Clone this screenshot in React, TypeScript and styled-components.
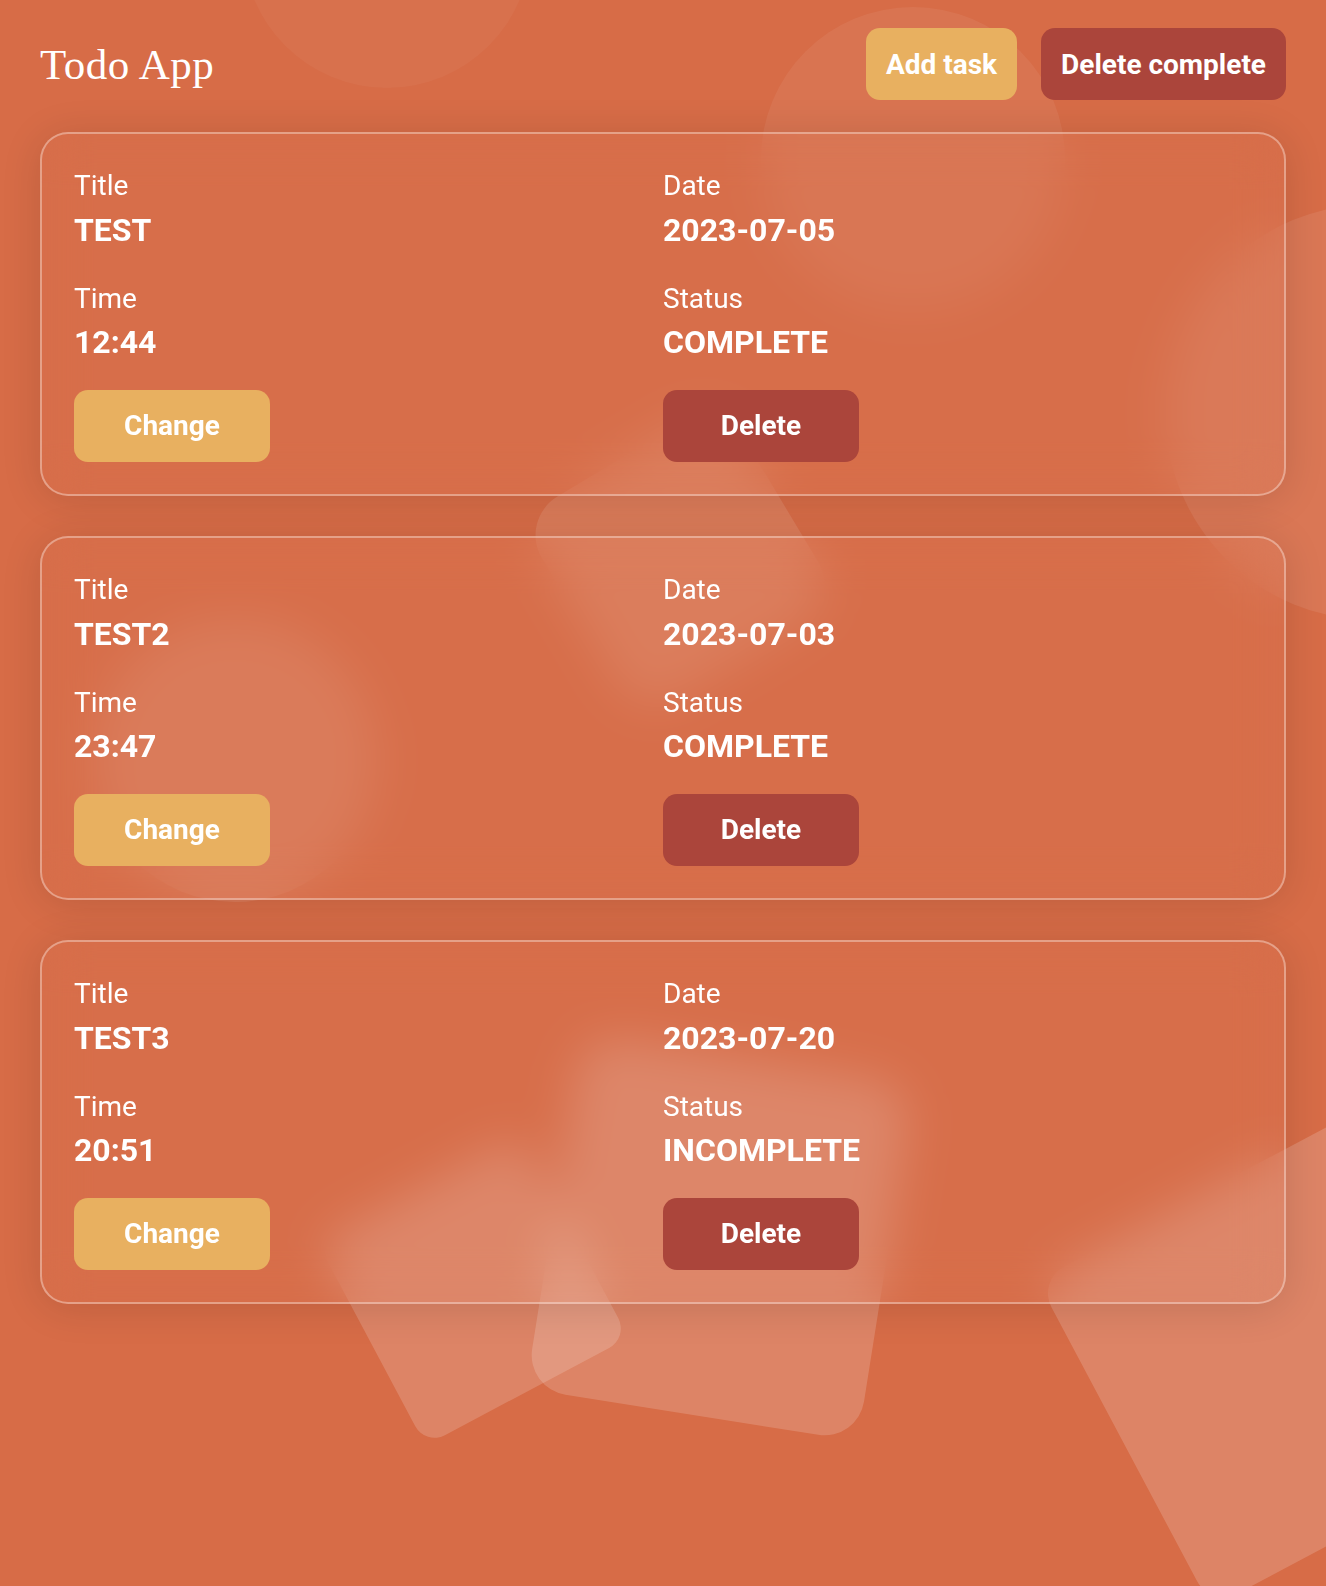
import React from "react";
import styled, { createGlobalStyle } from "styled-components";

type Status = "COMPLETE" | "INCOMPLETE";

type Task = {
  id: number;
  title: string;
  date: string;
  time: string;
  status: Status;
};

const tasks: Task[] = [
  { id: 1, title: "TEST", date: "2023-07-05", time: "12:44", status: "COMPLETE" },
  { id: 2, title: "TEST2", date: "2023-07-03", time: "23:47", status: "COMPLETE" },
  { id: 3, title: "TEST3", date: "2023-07-20", time: "20:51", status: "INCOMPLETE" },
];

// decorative shapes floating behind the glass cards
const circles = [
  { cx: 387, cy: -56, r: 144, o: 0.035 },
  { cx: 913, cy: 159, r: 152, o: 0.06 },
  { cx: 1373, cy: 412, r: 208, o: 0.08 },
  { cx: 235, cy: 760, r: 142, o: 0.09 },
];

const squares = [
  { cx: 680, cy: 560, w: 235, h: 235, rx: 45, a: -31, o: 0.1 },
  { cx: 473, cy: 1290, w: 230, h: 230, rx: 22, a: -28, o: 0.17 },
  { cx: 720, cy: 1237, w: 336, h: 360, rx: 40, a: 9, o: 0.17 },
  { cx: 1292, cy: 1355, w: 380, h: 370, rx: 30, a: -28, o: 0.17 },
];

const GlobalStyle = createGlobalStyle`
  html, body {
    margin: 0;
    padding: 0;
    background: #d76c47;
  }
  body {
    font-family: Roboto, "Liberation Sans", sans-serif;
    color: #fff;
  }
  * {
    box-sizing: border-box;
  }
`;

const Backdrop = () => (
  <BackdropSvg viewBox="0 0 1326 1586" preserveAspectRatio="xMidYMin slice">
    {circles.map((c, i) => (
      <circle key={i} cx={c.cx} cy={c.cy} r={c.r} fill="#fff" fillOpacity={c.o} />
    ))}
    {squares.map((s, i) => (
      <rect
        key={i}
        x={-s.w / 2}
        y={-s.h / 2}
        width={s.w}
        height={s.h}
        rx={s.rx}
        fill="#fff"
        fillOpacity={s.o}
        transform={`translate(${s.cx} ${s.cy}) rotate(${s.a})`}
      />
    ))}
  </BackdropSvg>
);

const TaskCard = ({ task }: { task: Task }) => (
  <Card>
    <Column>
      <Field>
        <Label>Title</Label>
        <Value>{task.title}</Value>
      </Field>
      <Field>
        <Label>Time</Label>
        <Value>{task.time}</Value>
      </Field>
      <CardButton type="button" $variant="primary">
        Change
      </CardButton>
    </Column>
    <Column>
      <Field>
        <Label>Date</Label>
        <Value>{task.date}</Value>
      </Field>
      <Field>
        <Label>Status</Label>
        <Value>{task.status}</Value>
      </Field>
      <CardButton type="button" $variant="danger">
        Delete
      </CardButton>
    </Column>
  </Card>
);

const App = () => {
  return (
    <Page>
      <GlobalStyle />
      <Backdrop />
      <Content>
        <Header>
          <AppTitle>Todo App</AppTitle>
          <Actions>
            <HeaderButton type="button" $variant="primary">
              Add task
            </HeaderButton>
            <HeaderButton type="button" $variant="danger">
              Delete complete
            </HeaderButton>
          </Actions>
        </Header>
        <TaskList>
          {tasks.map((task) => (
            <TaskCard key={task.id} task={task} />
          ))}
        </TaskList>
      </Content>
    </Page>
  );
};

export default App;

const Page = styled.div`
  position: relative;
  min-height: 100vh;
  overflow: hidden;
  background: #d76c47;
`;

const BackdropSvg = styled.svg`
  position: absolute;
  top: 0;
  left: 0;
  width: 100%;
  height: 100%;
  z-index: 0;
  pointer-events: none;
`;

const Content = styled.div`
  position: relative;
  z-index: 1;
  padding: 28px 40px 40px;
`;

const Header = styled.header`
  display: flex;
  align-items: center;
  justify-content: space-between;
  height: 72px;
`;

const AppTitle = styled.h1`
  margin: 0;
  font-family: "Liberation Serif", "Times New Roman", serif;
  font-size: 43px;
  letter-spacing: 0.5px;
  font-weight: 400;
  line-height: 1;
  color: #fff;
`;

const Actions = styled.div`
  display: flex;
  gap: 24px;
`;

const Button = styled.button<{ $variant: "primary" | "danger" }>`
  border: none;
  border-radius: 14px;
  font-family: Roboto, "Liberation Sans", sans-serif;
  font-size: 28px;
  font-weight: 700;
  color: #fff;
  cursor: pointer;
  background: ${(p) => (p.$variant === "primary" ? "#e8b060" : "#ab453b")};
`;

const HeaderButton = styled(Button)`
  height: 72px;
  padding: 0 20px;
`;

const CardButton = styled(Button)`
  width: 196px;
  height: 72px;
  margin-top: 27.5px;
`;

const TaskList = styled.div`
  display: flex;
  flex-direction: column;
  gap: 40px;
  margin-top: 32px;
`;

const Card = styled.section`
  display: grid;
  grid-template-columns: 1fr 1fr;
  padding: 35px 32px 32.5px;
  border: 2px solid rgba(255, 255, 255, 0.35);
  border-radius: 28px;
  background: rgba(255, 255, 255, 0.02);
  box-shadow: 0 4px 40px rgba(0, 0, 0, 0.12);
  backdrop-filter: blur(24px);
`;

const Column = styled.div`
  display: flex;
  flex-direction: column;
  align-items: flex-start;
`;

const Field = styled.div`
  & + & {
    margin-top: 32px;
  }
`;

const Label = styled.div`
  font-size: 28px;
  line-height: 33px;
  font-weight: 400;
  margin-bottom: 7.5px;
`;

const Value = styled.div`
  font-size: 32px;
  line-height: 40px;
  font-weight: 700;
`;
